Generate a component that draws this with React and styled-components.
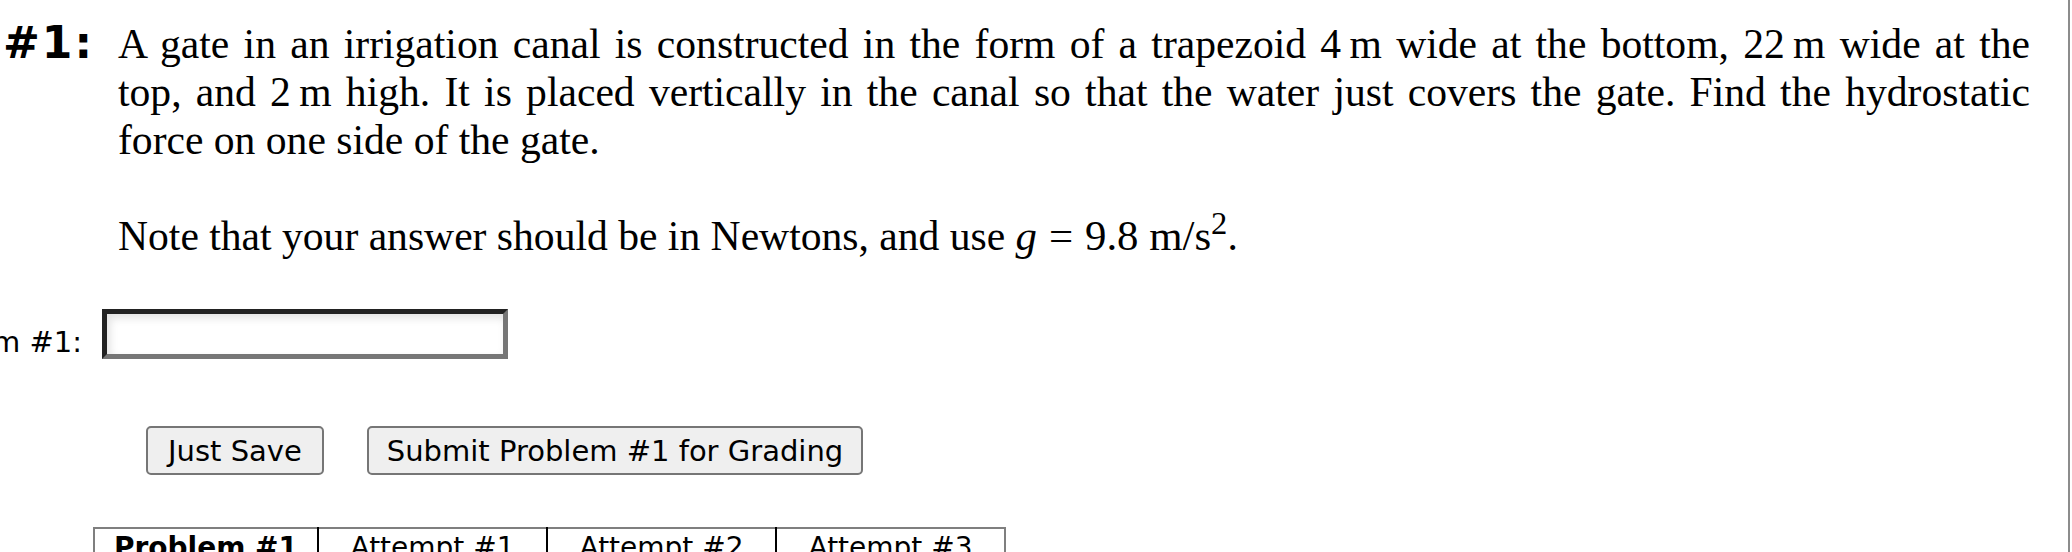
import styled, { createGlobalStyle } from 'styled-components'

const GlobalStyle = createGlobalStyle`
  html, body {
    margin: 0;
    padding: 0;
    background: #fff;
    overflow: hidden;
  }
  body {
    font-family: "Liberation Serif", "Times New Roman", serif;
    color: #000;
  }
`

const Frame = styled.div`
  width: 2068px;
  min-height: 100vh;
  border-right: 2px solid #8c8c8c;
  padding-top: 17px;
`

const ProblemRow = styled.div`
  display: flex;
  align-items: baseline;
  padding-right: 38px;
`

const Number = styled.div`
  flex: 0 0 118px;
  box-sizing: border-box;
  padding-left: 3px;
  font-family: "DejaVu Sans", Verdana, sans-serif;
  font-weight: bold;
  font-size: 44px;
  letter-spacing: 2px;
`

const Body = styled.div`
  flex: 1;
  font-size: 41.6px;
  line-height: normal;
`

const Para = styled.div`
  margin-top: ${(p) => (p.$gap ? '48px' : '0')};
  text-align: justify;
`

const Line = styled.span`
  display: block;
  text-align: justify;
  text-align-last: ${(p) => (p.$last ? 'left' : 'justify')};
  white-space: nowrap;
`

const Math = styled.span`
  font-size: 1.03em;
  line-height: 0;
`

const Var = styled.i`
  font-style: italic;
`

const Op = styled.span`
  margin: 0 0.278em;
`

const Unit = styled.span`
  margin-left: 0.25em;
`

const Sup = styled.span`
  font-size: 0.76em;
  vertical-align: 16px;
  line-height: 0;
`

const AnswerRow = styled.div`
  display: flex;
  align-items: flex-start;
  gap: 20px;
  margin-top: 49px;
`

const Label = styled.div`
  width: 82px;
  padding-top: 16px;
  display: flex;
  justify-content: flex-end;
  white-space: nowrap;
  font-family: "DejaVu Sans", Verdana, sans-serif;
  font-size: 29px;
  line-height: normal;
`

const AnswerInput = styled.input`
  box-sizing: border-box;
  width: 406px;
  height: 50px;
  margin: 0;
  padding: 0 8px;
  border-style: solid;
  border-width: 5px;
  border-color: #222 #767676 #767676 #222;
  background: #fff;
  box-shadow: inset 3px 4px 8px rgba(0, 0, 0, 0.12);
  font-family: "DejaVu Sans", Verdana, sans-serif;
  font-size: 29px;
  outline: none;
`

const Buttons = styled.div`
  display: flex;
  gap: 43px;
  margin-top: 67px;
  padding-left: 146px;
`

const Button = styled.button`
  box-sizing: border-box;
  height: 49px;
  margin: 0;
  padding: 0 ${(p) => p.$pad}px;
  background: #efefef;
  border: 2px solid #767676;
  border-radius: 5px;
  color: #000;
  font-family: "DejaVu Sans", Verdana, sans-serif;
  font-size: 29px;
  white-space: nowrap;
`

const Attempts = styled.table`
  margin: 52px 0 0 93px;
  border-collapse: collapse;
  border-top: 2px solid #7f7f7f;
  border-left: 2px solid #7f7f7f;
  border-right: 2px solid #7f7f7f;
`

const Head = styled.th`
  box-sizing: border-box;
  width: ${(p) => p.$w}px;
  padding: 2px 0 4px;
  border-left: ${(p) => (p.$first ? 'none' : '2px solid #000')};
  font-family: "DejaVu Sans", Verdana, sans-serif;
  font-size: 28px;
  font-weight: ${(p) => (p.$bold ? 'bold' : 'normal')};
  text-align: center;
  white-space: nowrap;
`

const columns = [
  { text: 'Problem #1', w: 224, bold: true },
  { text: 'Attempt #1', w: 229 },
  { text: 'Attempt #2', w: 229 },
  { text: 'Attempt #3', w: 229 },
]

export default function App() {
  return (
    <>
      <GlobalStyle />
      <Frame>
        <ProblemRow>
          <Number>#1:</Number>
          <Body>
            <Para>
              <Line>
                A gate in an irrigation canal is constructed in the form of a trapezoid 4{'\u2009'}m wide at the bottom, 22{'\u2009'}m wide at the
              </Line>
              <Line>
                top, and 2{'\u2009'}m high. It is placed vertically in the canal so that the water just covers the gate. Find the hydrostatic
              </Line>
              <Line $last>force on one side of the gate.</Line>
            </Para>
            <Para $gap>
              <Line $last>
                Note that your answer should be in Newtons, and use{' '}
                <Math>
                  <Var>g</Var>
                  <Op>=</Op>9.8
                  <Unit>
                    m/s<Sup>2</Sup>
                  </Unit>
                </Math>
                .
              </Line>
            </Para>
          </Body>
        </ProblemRow>

        <AnswerRow>
          <Label>Answer to Problem #1:</Label>
          <AnswerInput type="text" />
        </AnswerRow>

        <Buttons>
          <Button $pad={20}>Just Save</Button>
          <Button $pad={18}>Submit Problem #1 for Grading</Button>
        </Buttons>

        <Attempts>
          <thead>
            <tr>
              {columns.map((c, i) => (
                <Head key={c.text} $w={c.w} $bold={c.bold} $first={i === 0}>
                  {c.text}
                </Head>
              ))}
            </tr>
          </thead>
        </Attempts>
      </Frame>
    </>
  )
}
